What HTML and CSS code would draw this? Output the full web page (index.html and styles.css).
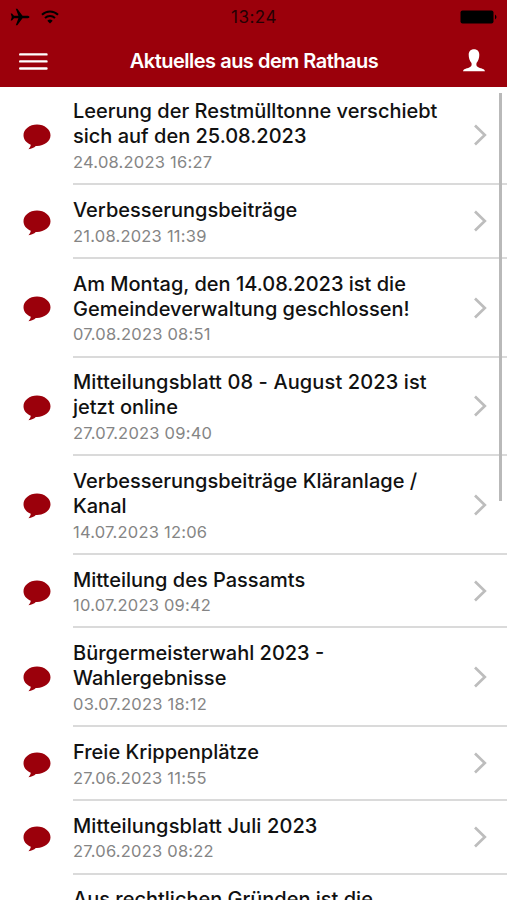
FILE: index.html
```html
<!DOCTYPE html>
<html lang="de">
<head>
<meta charset="utf-8">
<title>Aktuelles aus dem Rathaus</title>
<link rel="stylesheet" href="styles.css">
</head>
<body>
<svg class="defs" aria-hidden="true">
<symbol id="bubble" viewBox="0 0 28 26"><path d="M14 .5C6.600.5.5 5.300.5 11.300c0 4.300 2.900 7.700 7.300 9.500-.2 1.400-.9 2.900-2.300 4.400 3.200-.4 5.600-1.700 7.300-3.300h1.200c7.400 0 13.500-4.600 13.500-10.600S21.400.5 14 .5z" fill="#9b000b"/></symbol>
<symbol id="chevron" viewBox="0 0 14 24"><path d="M2 2.500 11.800 12 2 21.500" fill="none" stroke="#bdbdbd" stroke-width="2.700"/></symbol>
</svg>
<header class="header">
<div class="status">
<div class="signals">
<svg width="20" height="18" viewBox="0 0 20 18"><path d="M19.500 9c0-.8-1.400-1.300-2.500-1.300h-4.500L7.300.8H5.800l2.600 6.900H4L2 5.400H.7L1.800 9 .7 12.600H2l2-2.300h4.400l-2.600 6.900h1.500l5.200-6.900H17c1.100 0 2.500-.5 2.500-1.300z"/></svg>
<svg width="18" height="14" viewBox="0 0 18 14"><path d="M1 4.700a11.500 11.500 0 0 1 16 0M4 8a7.200 7.200 0 0 1 10 0" fill="none" stroke="#000" stroke-width="2"/><path d="M9 13.500 6.300 10.800a4 4 0 0 1 5.400 0z"/></svg>
</div>
<span class="clock">13:24</span>
<svg class="battery" width="38" height="14" viewBox="0 0 38 14"><rect x=".5" y=".5" width="33" height="13" rx="2"/><path d="M35 4.500q3 2.500 0 5z"/></svg>
</div>
<div class="nav">
<svg width="30" height="20" viewBox="0 0 30 20"><path d="M2.200 3.400h26.300M2.200 10.400h26.300M2.200 17.500h26.300" stroke="#fff" stroke-width="2.400" stroke-linecap="round"/></svg>
<h1 class="heading">Aktuelles aus dem Rathaus</h1>
<svg width="24" height="23" viewBox="0 0 24 23"><path d="M12 .2C8.700.2 6.700 2.300 6.700 5.700c0 3 .9 6.300 2.800 8.300.5 2.600-.3 3.700-2.300 4.500C4.300 19.600 1.500 19.900 1 22.200h22c-.5-2.300-3.300-2.600-6.200-3.700-2-.8-2.800-1.900-2.300-4.500 1.900-2 2.800-5.300 2.800-8.300 0-3.400-2-5.500-5.300-5.500z" fill="#fff"/></svg>
</div>
</header>
<main class="list">
<article class="row"><svg class="bubble"><use href="#bubble"/></svg><div class="body"><div class="text"><h2>Leerung der Restmülltonne verschiebt<br>sich auf den 25.08.2023</h2><time>24.08.2023 16:27</time></div><svg class="chevron"><use href="#chevron"/></svg></div></article>
<article class="row"><svg class="bubble"><use href="#bubble"/></svg><div class="body"><div class="text"><h2>Verbesserungsbeiträge</h2><time>21.08.2023 11:39</time></div><svg class="chevron"><use href="#chevron"/></svg></div></article>
<article class="row"><svg class="bubble"><use href="#bubble"/></svg><div class="body"><div class="text"><h2>Am Montag, den 14.08.2023 ist die<br>Gemeindeverwaltung geschlossen!</h2><time>07.08.2023 08:51</time></div><svg class="chevron"><use href="#chevron"/></svg></div></article>
<article class="row"><svg class="bubble"><use href="#bubble"/></svg><div class="body"><div class="text"><h2><span class="wide">Mitteilungsblatt 08 - August 2023 ist</span><br>jetzt online</h2><time>27.07.2023 09:40</time></div><svg class="chevron"><use href="#chevron"/></svg></div></article>
<article class="row"><svg class="bubble"><use href="#bubble"/></svg><div class="body"><div class="text"><h2>Verbesserungsbeiträge Kläranlage /<br>Kanal</h2><time>14.07.2023 12:06</time></div><svg class="chevron"><use href="#chevron"/></svg></div></article>
<article class="row"><svg class="bubble"><use href="#bubble"/></svg><div class="body"><div class="text"><h2>Mitteilung des Passamts</h2><time>10.07.2023 09:42</time></div><svg class="chevron"><use href="#chevron"/></svg></div></article>
<article class="row"><svg class="bubble"><use href="#bubble"/></svg><div class="body"><div class="text"><h2>Bürgermeisterwahl 2023 -<br>Wahlergebnisse</h2><time>03.07.2023 18:12</time></div><svg class="chevron"><use href="#chevron"/></svg></div></article>
<article class="row"><svg class="bubble"><use href="#bubble"/></svg><div class="body"><div class="text"><h2>Freie Krippenplätze</h2><time>27.06.2023 11:55</time></div><svg class="chevron"><use href="#chevron"/></svg></div></article>
<article class="row"><svg class="bubble"><use href="#bubble"/></svg><div class="body"><div class="text"><h2><span class="wide">Mitteilungsblatt Juli 2023</span></h2><time>27.06.2023 08:22</time></div><svg class="chevron"><use href="#chevron"/></svg></div></article>
<article class="row"><div class="bubble"></div><div class="body"><div class="text"><h2>Aus rechtlichen Gründen ist die</h2></div></div></article>
<div class="scrollbar"></div>
</main>
</body>
</html>
```
FILE: styles.css
```css
* { box-sizing: border-box; }
body {
  margin: 0;
  height: 900px;
  overflow: hidden;
  display: flex;
  flex-direction: column;
  background: #fff;
  font-family: Inter, "Liberation Sans", sans-serif;
}
.defs { display: none; }
svg { display: block; flex: none; }
.header {
  flex: none;
  height: 87px;
  background: #9b000b;
}
.status {
  height: 34px;
  padding: 0 9px 0 10px;
  display: grid;
  grid-template-columns: 1fr auto 1fr;
  align-items: center;
}
.signals { display: flex; align-items: center; gap: 11px; }
.signals svg:last-child { margin-top: -1px; }
.clock { font-size: 17px; letter-spacing: 0.5px; color: #250003; }
.battery { justify-self: end; }
.nav {
  height: 53px;
  padding: 0 21px 0 18px;
  display: flex;
  align-items: center;
  justify-content: space-between;
}
.heading {
  margin: 0 2px 0 0;
  font-size: 20px;
  font-weight: 600;
  letter-spacing: -0.5px;
  color: #fff;
}
.list {
  position: relative;
  flex: 1;
  min-height: 0;
  overflow: hidden;
}
.row { display: flex; align-items: center; }
.row:first-child { margin-top: -0.4px; }
.bubble { width: 28px; height: 26px; margin: 2px 22px 0 23px; flex: none; }
.body {
  flex: 1;
  display: flex;
  align-items: center;
  justify-content: space-between;
  padding: 12.800px 20px 9.200px 0;
  border-bottom: 2px solid #dadada;
}
.text { white-space: nowrap; }
h2 {
  margin: 0;
  font-size: 20px;
  line-height: 24.8px;
  font-weight: 500;
  color: #111;
}
.wide { letter-spacing: 0.12px; }
time {
  display: block;
  padding-top: 1px;
  font-size: 16.500px;
  line-height: 24px;
  letter-spacing: 0.22px;
  color: #858585;
}
.chevron { width: 14px; height: 24px; margin-top: -3px; }
.scrollbar {
  position: absolute;
  top: 6px;
  right: 5px;
  width: 3px;
  height: 408px;
  background: #b9b9b9;
}
```
